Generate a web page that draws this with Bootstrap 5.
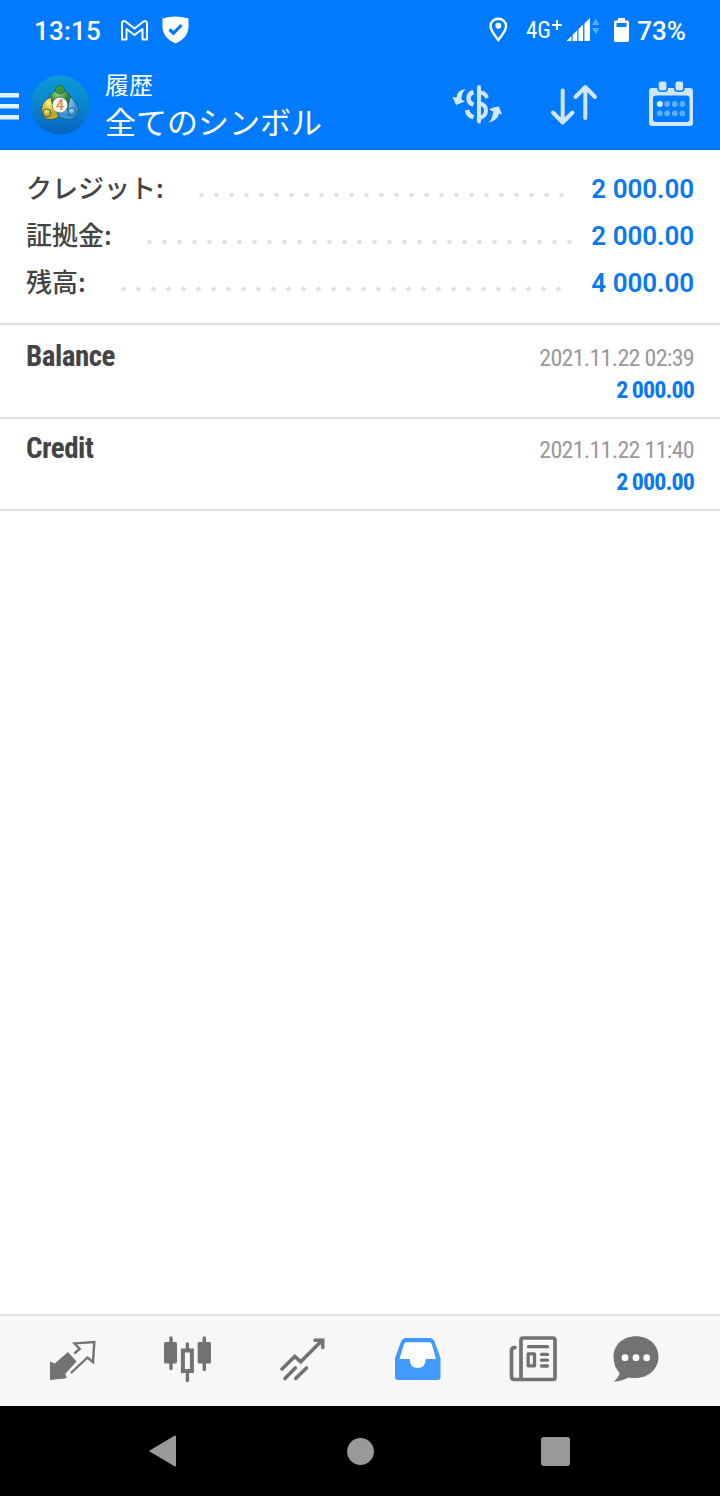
<!DOCTYPE html>
<html lang="ja">
<head>
<meta charset="utf-8">
<meta name="viewport" content="width=device-width, initial-scale=1">
<title>履歴</title>
<link href="https://cdn.jsdelivr.net/npm/bootstrap@5.3.0/dist/css/bootstrap.min.css" rel="stylesheet">
<style>
body{font-family:Roboto,"Noto Sans CJK JP",sans-serif;color:#444;background:#fff;line-height:1}
svg{display:block;flex:none}
.blue{background:#007aff;color:#fff}
.statusbar{height:60px;padding:1px 34px 0 34px;font-size:26px;font-weight:500}
.statusbar svg{margin-top:-1px}
.clock{width:86px;letter-spacing:.2px}
.net{font-family:"Roboto Condensed",Roboto,sans-serif;font-stretch:75%;font-size:23px;font-weight:400;width:40px}
.appbar{height:90px;border-bottom:1px solid #0072ea}
.titles{font-family:"Noto Sans CJK JP",sans-serif;margin-left:15px}
.t1{font-size:24px;line-height:30px;margin-top:2px}
.t2{font-size:31px;line-height:44px}
.summary{padding:15px 26px 0;height:175px;border-bottom:2px solid #e0e0e0;font-size:26px}
.sumrow{height:47px}
.lbl{font-family:"Noto Sans CJK JP",sans-serif;font-weight:500;color:#444;margin-top:-3px}
.amt{color:#0a78f0;font-weight:600;text-align:right;white-space:nowrap;letter-spacing:-.05px;word-spacing:.2px}
.dots{height:6px;margin:12px 0 0 35px;background:radial-gradient(circle at 2.5px 3px,#e2e2e2 1.9px,transparent 2.7px) 0 0/15px 6px repeat-x}
.deal{height:92px;padding:0 26px;border-bottom:2px solid #e0e0e0;font-family:"Roboto Condensed",Roboto,sans-serif;font-stretch:75%}
.deal:first-child{height:94px;padding-top:2px}
.kind{font-size:29px;font-weight:700;margin-top:15px;letter-spacing:-.5px}
.when{font-size:24px;color:#999;margin-top:19px;letter-spacing:-.7px}
.sum{font-size:24px;font-weight:700;color:#0a78f0;margin-top:8px;letter-spacing:-.9px;word-spacing:-.4px}
.tabs{height:92px;background:#f7f7f7;border-top:2px solid #e0e0e0;padding-bottom:4px}
.sysnav{height:90px;background:#000}
</style>
</head>
<body>
<div class="d-flex flex-column vh-100 overflow-hidden">
<header class="blue">
  <div class="statusbar d-flex align-items-center">
    <span class="clock">13:15</span>
    <svg width="28" height="22" viewBox="120 19 28 22" fill="none" stroke="#fff" stroke-width="2" stroke-linejoin="round"><path d="M122 39.500V23.500q.5-3.500 3.500-2L134.500 28.500 143.500 21.500q3-1.500 3.500 2V39.500h-4.500V29L134.500 35 126.500 29V39.500Z"/></svg>
    <svg style="margin-left:13px" width="28" height="28" viewBox="161 17 28 28"><path fill="#fff" d="M162.500 19.500Q175 15.500 188.500 19.500V27Q188.500 39 175.500 44.500 162.500 39 162.500 27Z"/><path fill="none" stroke="#007aff" stroke-width="3.200" d="m169.500 30.500 4 3.700 8-8.200"/></svg>
    <svg class="ms-auto" width="20" height="26" viewBox="488 17 20 26"><path fill="none" stroke="#fff" stroke-width="2.400" d="M498.300 40Q490.500 30.500 490.500 26a7.800 7.300 0 0 1 15.600 0Q506.100 30.500 498.300 40Z"/><circle cx="498.300" cy="25.800" r="3" fill="#fff"/></svg>
    <span class="net d-flex" style="margin-left:18px">4G<svg width="12" height="14" viewBox="0 0 12 14" class="mt-0"><path stroke="#fff" stroke-width="2" d="M1 6h10M6 1v10"/></svg></span>
    <svg width="34" height="26" viewBox="566 17 34 26"><path fill="#fff" d="m566.500 41 5-5v5zM572.700 34.800l4.600-4.500V41h-4.600zM578.500 29l4.600-4.500V41h-4.600zM584.400 23.500l5.600-5.500V41h-5.600z"/><path fill="#5cabff" d="m592 25 3.700-6.500 3.700 6.500zM592 28h7.400l-3.700 6.500z"/></svg>
    <svg style="margin-left:14px" width="16" height="26" viewBox="614 17 16 26"><path fill="#fff" d="M618 18h7v2.500h2.500q1.500 0 1.500 1.500V40.500q0 1.500-1.500 1.500h-12q-1.500 0-1.500-1.500V22q0-1.500 1.500-1.500H618Z"/><path fill="#007aff" d="M616.500 23h10v4h-10z"/></svg>
    <span class="text-end" style="width:56px">73%</span>
  </div>
  <div class="appbar d-flex align-items-center">
    <svg style="margin-top:4px" width="19" height="30" viewBox="0 92 19 30"><path fill="#e2f1ff" d="M0 93h19v4.500H0zM0 104h19v4.500H0zM0 115h19v4.500H0z"/></svg>
    <svg style="margin-left:11px" width="60" height="60" viewBox="30 75 60 60">
      <defs>
        <linearGradient id="sky" x2="0" y2="1"><stop stop-color="#0a9cda"/><stop offset=".5" stop-color="#0b84cf"/><stop offset="1" stop-color="#0663bd"/></linearGradient>
        <radialGradient id="gr" cx=".4" cy=".25"><stop stop-color="#a2d86a"/><stop offset="1" stop-color="#267c3c"/></radialGradient>
        <radialGradient id="ye" cx=".4" cy=".25"><stop stop-color="#fff47a"/><stop offset="1" stop-color="#c8a520"/></radialGradient>
        <radialGradient id="bl" cx=".4" cy=".25"><stop stop-color="#b5e6fb"/><stop offset="1" stop-color="#3a8fd0"/></radialGradient>
      </defs>
      <circle cx="60" cy="105" r="29.500" fill="url(#sky)"/>
      <g stroke="#145a76" stroke-width=".8">
        <path fill="url(#gr)" d="M49 103Q48 91 60 90 72 91 71.500 103L66 105Q66 98 60 97 54 98 54 106Z"/>
        <path fill="url(#ye)" d="M51 97Q41.500 101 41.500 110 42 119.500 50 119.500 57 119.500 60 115L53 108Z"/>
        <path fill="url(#bl)" d="M70 96.500Q79.500 105 78.500 112 76 119.500 69 119.500 60 119.500 57 113.500L68 109Z"/>
        <circle cx="60" cy="89.500" r="4.500" fill="#3b9a3e"/>
        <circle cx="47" cy="113" r="4" fill="url(#ye)"/>
        <circle cx="72" cy="112" r="4" fill="url(#bl)"/>
      </g>
      <circle cx="60" cy="105" r="7.500" fill="#fbf5ee"/>
      <text x="60" y="110" text-anchor="middle" font-family="Roboto,sans-serif" font-weight="500" font-size="14" fill="#ed7d3a">4</text>
    </svg>
    <div class="titles"><div class="t1">履歴</div><div class="t2">全てのシンボル</div></div>
    <svg class="ms-auto" width="52" height="42" viewBox="451 84 52 42" fill="none" stroke="#d2e6ff" stroke-width="4" stroke-linecap="round">
      <path d="M479 87V121.500M480 92.500q5 .5 6.500 4M480 103.500q6 1.500 6 7t-6 7.500"/>
      <path stroke-linecap="butt" stroke-width="4.500" d="M473.500 92q-5 1.500-5 6.500 0 4.500 5 6M467 110q1 5.500 6.500 7.500"/>
      <path fill="#d2e6ff" stroke="none" d="M465.500 89Q457 90 456.500 97.500L452.500 97 456 105 465 101.500 461.500 99.500Q461 94 465.500 89ZM488.500 123Q498 120 499 113.500L502 114.500 499 106.500Q494 106.500 489 109.500L493 111.500Q493 118 488.500 123Z"/>
    </svg>
    <svg style="margin-left:46px" width="50" height="44" viewBox="549 83 50 44" fill="none" stroke="#d2e6ff" stroke-width="4" stroke-linecap="round" stroke-linejoin="round"><path d="M562.700 90.500V122M553 112.500l9.700 10 9.800-10M585.300 118V87M575.500 97l9.800-10 9.700 10"/></svg>
    <svg style="margin:-2px 26px 0 49px" width="46" height="46" viewBox="648 81 46 46">
      <path fill="#d2e6ff" fill-rule="evenodd" d="M652 88H690q3 0 3 3V123q0 3-3 3H652q-3 0-3-3V91q0-3 3-3ZM656 95.500q-3 0-3 3V119q0 3 3 3H686.500q3 0 3-3V98.500q0-3-3-3Z"/>
      <g fill="#d2e6ff" stroke="#007aff" stroke-width="1.500"><rect x="658" y="80.700" width="9.200" height="10.500" rx="3"/><rect x="674.700" y="80.700" width="9.200" height="10.500" rx="3"/></g>
      <circle cx="659.800" cy="104" r="3" fill="#e4f1ff"/>
      <g fill="#62aeff"><circle cx="667.200" cy="104" r="2.900"/><circle cx="674.800" cy="104" r="2.900"/><circle cx="682.300" cy="104" r="2.900"/><circle cx="659.800" cy="113.300" r="2.900"/><circle cx="667.200" cy="113.300" r="2.900"/><circle cx="674.800" cy="113.300" r="2.900"/><circle cx="682.300" cy="113.300" r="2.900"/></g>
    </svg>
  </div>
</header>
<section class="summary">
  <div class="sumrow d-flex align-items-center"><span class="lbl">クレジット:</span><span class="dots" style="width:366px"></span><span class="amt ms-auto">2 000.00</span></div>
  <div class="sumrow d-flex align-items-center"><span class="lbl">証拠金:</span><span class="dots" style="width:426px"></span><span class="amt ms-auto">2 000.00</span></div>
  <div class="sumrow d-flex align-items-center"><span class="lbl">残高:</span><span class="dots" style="width:441px"></span><span class="amt ms-auto">4 000.00</span></div>
</section>
<main class="flex-grow-1">
  <div class="deal d-flex justify-content-between"><div class="kind">Balance</div><div class="text-end"><div class="when">2021.11.22 02:39</div><div class="sum">2 000.00</div></div></div>
  <div class="deal d-flex justify-content-between"><div class="kind">Credit</div><div class="text-end"><div class="when">2021.11.22 11:40</div><div class="sum">2 000.00</div></div></div>
</main>
<nav class="tabs d-flex align-items-center">
  <svg style="margin-left:48px" width="50" height="50" viewBox="48 1334 50 50"><path fill="#727272" stroke="#727272" stroke-linejoin="round" d="M50.500 1362 54.700 1364 68 1352.500 76 1361.500 64.700 1374 66.300 1377.700 50.500 1379.500Z"/><path fill="none" stroke="#727272" stroke-width="2.400" d="M74.300 1353.500 79.700 1349 74.500 1343.400 94.300 1342 93 1362 87.500 1357.500 71 1373"/></svg>
  <svg style="margin-left:64px" width="52" height="50" viewBox="162 1334 52 50" fill="#727272"><rect x="164" y="1342" width="13" height="21.500" rx="1.500"/><rect x="197.700" y="1342" width="13.300" height="21.500" rx="1.500"/><path fill="none" stroke="#727272" stroke-width="3.400" stroke-linecap="round" d="M171 1338V1368.500M204.300 1338V1369.500M187.400 1344V1350M187.400 1372V1380.500"/><rect x="182.900" y="1350.500" width="9" height="20.500" fill="none" stroke="#727272" stroke-width="4"/></svg>
  <svg style="margin-left:64px" width="50" height="50" viewBox="278 1334 50 50" fill="none" stroke="#727272" stroke-width="3.600" stroke-linecap="round"><path d="M282 1369 294.700 1356.500 300.700 1361.700 322 1340.500M285 1378.500 295.300 1368M295.700 1378.500 306.500 1368"/><path d="M315 1340.300H322.700V1347.500"/></svg>
  <svg style="margin-left:65px" width="50" height="50" viewBox="393 1334 50 50"><path fill="#419afe" d="M395 1358 401 1341.500Q402.500 1338 406 1338H429.500Q433 1338 434.500 1341.500L440.500 1358V1377q0 3-3 3H398q-3 0-3-3Z"/><path fill="#fff" d="M399.500 1359 404 1344Q404.500 1342.300 406.500 1342.300H429.500Q431.300 1342.300 431.800 1344L436 1359H425.700Q425.500 1368 417.700 1368T409.700 1359Z"/></svg>
  <svg style="margin-left:65px" width="50" height="50" viewBox="508 1334 50 50" fill="none" stroke="#727272" stroke-width="3.700" stroke-linecap="round" stroke-linejoin="round"><rect x="521" y="1338" width="34" height="41.500" rx="2"/><path d="M515 1347.500Q511.500 1347.500 511.500 1351V1376.500q0 3 3 3H522"/><path stroke-width="3.300" d="M528.500 1346.700H547.500M541.500 1354.300H547.500M541.500 1360.200H547.500M541.500 1366H547.500M528.200 1353.800h6.300v12h-6.300z"/></svg>
  <svg style="margin-left:54px" width="50" height="50" viewBox="612 1334 50 50"><path fill="#727272" d="M636 1336.300C649 1336.300 658.500 1345 658.500 1357S648 1378 636 1378Q632 1378 628.500 1377.500 621 1381.500 614 1381.500 619 1377 619.500 1373 613.500 1366 613.500 1357C613.500 1345 623 1336.300 636 1336.300Z"/><g fill="#fff"><circle cx="625" cy="1357.700" r="3.400"/><circle cx="636" cy="1357.700" r="3.400"/><circle cx="646.700" cy="1357.700" r="3.400"/></g></svg>
</nav>
<div class="sysnav d-flex align-items-center">
  <svg style="margin-left:148px" width="30" height="34" viewBox="147 1434.500 30 34"><path fill="#999" stroke="#999" stroke-width="2" stroke-linejoin="round" d="M149.500 1451.500 174 1437V1466Z"/></svg>
  <svg style="margin-left:168px" width="29" height="29" viewBox="0 0 29 29"><circle cx="14.500" cy="14.500" r="13.400" fill="#999"/></svg>
  <svg style="margin-left:166px" width="29" height="29" viewBox="0 0 29 29"><rect width="29" height="29" rx="3" fill="#999"/></svg>
</div>
</div>
<script src="https://cdn.jsdelivr.net/npm/bootstrap@5.3.0/dist/js/bootstrap.bundle.min.js"></script>
</body>
</html>
